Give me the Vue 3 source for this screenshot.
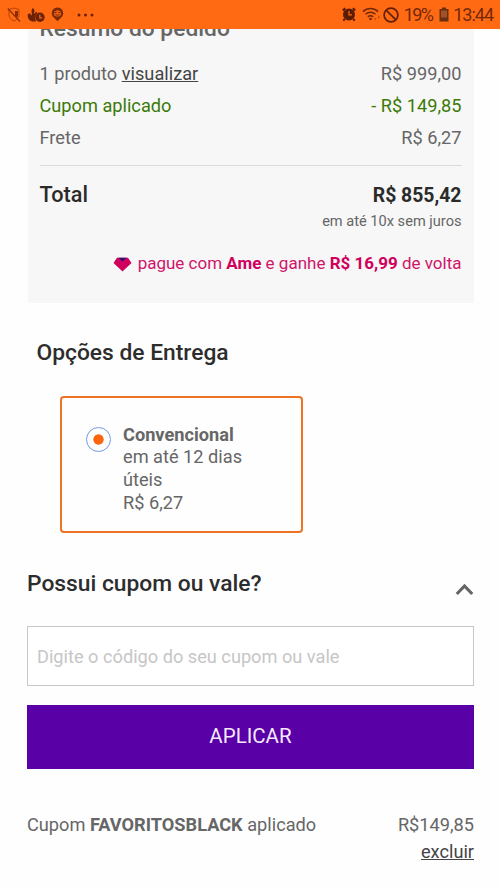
<script setup>
import { ref } from 'vue'

const rows = [
  { label: '1 produto', link: 'visualizar', value: 'R$ 999,00' },
  { label: 'Cupom aplicado', value: '- R$ 149,85', discount: true },
  { label: 'Frete', value: 'R$ 6,27' },
]
const coupon = ref('')
</script>

<template>
  <div class="screen">
    <header class="status">
      <div class="status-left">
        <svg class="ic-shield" width="14" height="16" viewBox="0 0 14 16">
          <path d="M2 2.500 7 1l5 1.500v5.200c0 3-2.200 5-5 6.300-2.800-1.300-5-3.300-5-6.300z" fill="none" stroke="#b5440b" stroke-width="1" />
          <path d="M8 4h3v4.500c0 1-.8 1.800-1.500 2.500L8 9z" fill="#8c2d05" />
          <path d="M.8 1.500 13 14.500" stroke="#8c2d05" stroke-width="1.100" />
        </svg>
        <svg class="ic-hand" width="18" height="16" viewBox="0 0 18 16">
          <path d="M5.800 1C4.600 2.300 4.200 4 4.800 6L4.600 8.800 2.800 6.200.7 7.200C.4 11 2 13.700 5 14.500h4L8 11l1-3 1.300-2.500-1.500-.7L7.500 7 7 5.500C8 4 7.500 2 5.800 1z" fill="#6e2205" />
          <circle cx="13" cy="10.300" r="4.700" fill="#6e2205" />
          <path d="M12.800 7.800v3h2.300" fill="none" stroke="#f96813" stroke-width="1.200" />
        </svg>
        <svg class="ic-pin" width="13" height="15" viewBox="0 0 13 15">
          <path d="M6.500.5a5.700 5.700 0 0 1 3.700 10L6.500 14.300 2.800 10.500A5.700 5.700 0 0 1 6.500.5z" fill="#7c2906" />
          <path d="M3 4.800 6.500 3l3.500 1.800v2.600c-.5 1.400-1.600 2.100-3.500 2.100S3.500 8.800 3 7.400z" fill="#e85e12" />
          <path d="M3.500 5.500h2M7.500 5.500h2M4.500 7.500c1 .9 3 .9 4 0" fill="none" stroke="#7c2906" stroke-width="1" />
        </svg>
        <svg class="ic-dots" width="17" height="4" viewBox="0 0 17 4" fill="#6e2205">
          <circle cx="2" cy="2" r="1.500" /><circle cx="8.500" cy="2" r="1.500" /><circle cx="15" cy="2" r="1.500" />
        </svg>
      </div>
      <div class="status-right">
        <svg class="ic-alarm" width="14" height="15" viewBox="0 0 14 15">
          <circle cx="7" cy="7.500" r="6" fill="#5c1c03" />
          <path d="M.8 3.500 3.200 1.200M13.200 3.500 10.800 1.200M2.800 12 1.300 13.700M11.200 12l1.500 1.700" stroke="#5c1c03" stroke-width="2" />
          <path d="M7 4v3.800h3" fill="none" stroke="#f96813" stroke-width="1.200" />
        </svg>
        <svg class="ic-wifi" width="19" height="15" viewBox="0 0 19 15">
          <g fill="none" stroke="#74290a" stroke-width="1.500">
            <path d="M1 4.600c4.200-4 10.800-4 15 0M3.500 7.300c2.900-2.600 7.100-2.600 10 0M5.900 9.900c1.500-1.400 3.700-1.400 5.200 0" />
          </g>
          <circle cx="8.500" cy="12" r="1.300" fill="#74290a" />
          <path d="m11.800 11.300 1.300 2.200 1.300-2.200zM15.500 11l1.300-2.200 1.300 2.200z" fill="#b84a10" />
        </svg>
        <svg class="ic-block" width="16" height="16" viewBox="0 0 16 16" fill="none" stroke="#64200a" stroke-width="1.700">
          <circle cx="8" cy="8" r="6.900" /><path d="m3.300 3.300 9.400 9.400" />
        </svg>
        <span class="battery-text">19%</span>
        <svg class="ic-battery" width="10" height="15" viewBox="0 0 10 15">
          <path d="M3 .5h4V2h2.500v12.500H.5V2H3z" fill="#64300f" />
          <path d="M2 3.500h6v7H2z" fill="#a45124" />
        </svg>
        <span class="clock">13:44</span>
      </div>
    </header>

    <section class="summary">
      <h2 class="summary-title">Resumo do pedido</h2>
      <div v-for="row in rows" :key="row.label" class="row" :class="{ discount: row.discount }">
        <span>{{ row.label }} <a v-if="row.link" class="link">{{ row.link }}</a></span>
        <span>{{ row.value }}</span>
      </div>
      <div class="total">
        <span class="total-label">Total</span>
        <span class="total-value">R$ 855,42</span>
      </div>
      <p class="installments">em até 10x sem juros</p>
      <p class="cashback">
        <svg class="gem" width="19" height="15" viewBox="0 0 19 15">
          <path d="M4 .8h11l3.500 5.200-9 8.500L.5 6z" fill="#d0005f" />
          <path d="M5.300.8h8.400L9.500 4.500z" fill="#35106f" />
        </svg>
        <span>pague com <b>Ame</b> e ganhe <b>R$ 16,99</b> de volta</span>
      </p>
    </section>

    <section class="delivery">
      <h2 class="heading">Opções de Entrega</h2>
      <div class="option">
        <span class="radio"></span>
        <div class="option-text"><b>Convencional</b><br>em até 12 dias úteis<br>R$ 6,27</div>
      </div>
    </section>

    <section class="coupon">
      <div class="coupon-head">
        <h2 class="heading">Possui cupom ou vale?</h2>
        <svg class="chevron" width="19" height="13" viewBox="0 0 19 13">
          <path d="m1.800 11 7.700-8 7.700 8" fill="none" stroke="#666" stroke-width="3.200" />
        </svg>
      </div>
      <input v-model="coupon" class="field" type="text" placeholder="Digite o código do seu cupom ou vale">
      <button class="apply">APLICAR</button>
      <div class="applied">
        <span>Cupom <b>FAVORITOSBLACK</b> aplicado</span>
        <span class="applied-value">R$149,85</span>
      </div>
      <div class="remove"><a class="link">excluir</a></div>
    </section>
  </div>
</template>

<style>
body { background: #fff; }
</style>

<style scoped>
.screen {
  width: 500px;
  height: 889px;
  overflow: hidden;
  box-sizing: border-box;
  background: #fefefe;
  color: #666;
  font-family: Roboto, sans-serif;
  font-size: 18.2px;
}
h2, p { margin: 0; }
h2 { font-weight: 500; }
b { font-weight: 700; }
.status {
  height: 29px;
  background: #ff6a13;
  display: flex;
  justify-content: space-between;
  align-items: center;
  padding: 0 7px 0 7px;
  color: #74290a;
}
.status-left, .status-right { display: flex; align-items: center; height: 28px; }
.ic-hand { margin-left: 6px; }
.ic-pin { margin-left: 6px; }
.ic-dots { margin-left: 13px; }
.ic-wifi { margin-left: 6px; }
.ic-block { margin-left: 2px; }
.battery-text { margin-left: 5px; font-size: 18px; line-height: 30px; letter-spacing: -1.700px; }
.ic-battery { margin-left: 6.500px; }
.clock { margin-left: 4.500px; font-size: 18px; line-height: 30px; letter-spacing: -1px; }
.summary {
  margin: 0 26px 0 28px;
  height: 274px;
  box-sizing: border-box;
  padding: 0 12.500px 0 11.500px;
  overflow: hidden;
  background: #f7f7f7;
}
.summary-title {
  margin-top: -13.500px;
  margin-bottom: 16.500px;
  font-size: 22.800px;
  line-height: 26px;
}
.row { display: flex; justify-content: space-between; line-height: 32.200px; }
.discount { color: #3b7a08; }
.link { color: #444; text-decoration: underline; }
.total {
  margin-top: 10px;
  border-top: 1px solid #dcdcdc;
  padding-top: 16px;
  display: flex;
  justify-content: space-between;
  line-height: 26px;
  color: #2b2b2b;
}
.total-label { font-size: 21.700px; font-weight: 500; }
.total-value { font-size: 19.400px; font-weight: 700; padding-top: 1px; }
.installments { text-align: right; font-size: 14.600px; line-height: 25px; }
.cashback {
  display: flex;
  justify-content: flex-end;
  align-items: center;
  gap: 6px;
  margin-top: 16.500px;
  font-size: 17px;
  line-height: 26px;
  color: #d0146a;
}
.cashback b { color: #d0005f; }
.gem { margin-top: 3px; }
.heading { color: #2d2d2d; font-size: 22.800px; line-height: 28px; }
.delivery { padding: 36px 0 0 36.500px; }
.option {
  margin: 29px 0 0 23px;
  width: 243px;
  height: 137px;
  box-sizing: border-box;
  border: 2px solid #ed7423;
  border-radius: 4px;
  display: flex;
  padding: 25px 40px 0 24px;
}
.radio {
  flex: none;
  width: 25px;
  height: 25px;
  margin: 4px 12.500px 0 0;
  box-sizing: border-box;
  border: 1.500px solid #7299e3;
  border-radius: 50%;
  background: radial-gradient(circle, #f9660e 4.800px, transparent 5.500px);
}
.option-text { line-height: 22.700px; padding-top: 0.500px; }
.coupon { padding: 36px 26px 0 27px; }
.coupon-head { display: flex; justify-content: space-between; height: 57px; }
.coupon .heading { padding-top: 0.500px; }
.chevron { margin-top: 14px; }
.field {
  display: block;
  width: 100%;
  height: 60px;
  box-sizing: border-box;
  border: 1px solid #c8c8c8;
  border-radius: 0;
  background: #fff;
  padding: 0 9px;
  font: inherit;
}
.field::placeholder { color: #c6c6c6; opacity: 1; }
.apply {
  display: block;
  width: 100%;
  height: 64px;
  margin-top: 19px;
  border: 0;
  padding: 0 0 2px;
  background: #5900a7;
  color: #f5e9fc;
  font: 20.500px Roboto, sans-serif;
}
.applied { display: flex; justify-content: space-between; margin-top: 42px; line-height: 27px; }
.remove { text-align: right; line-height: 27px; }
</style>
